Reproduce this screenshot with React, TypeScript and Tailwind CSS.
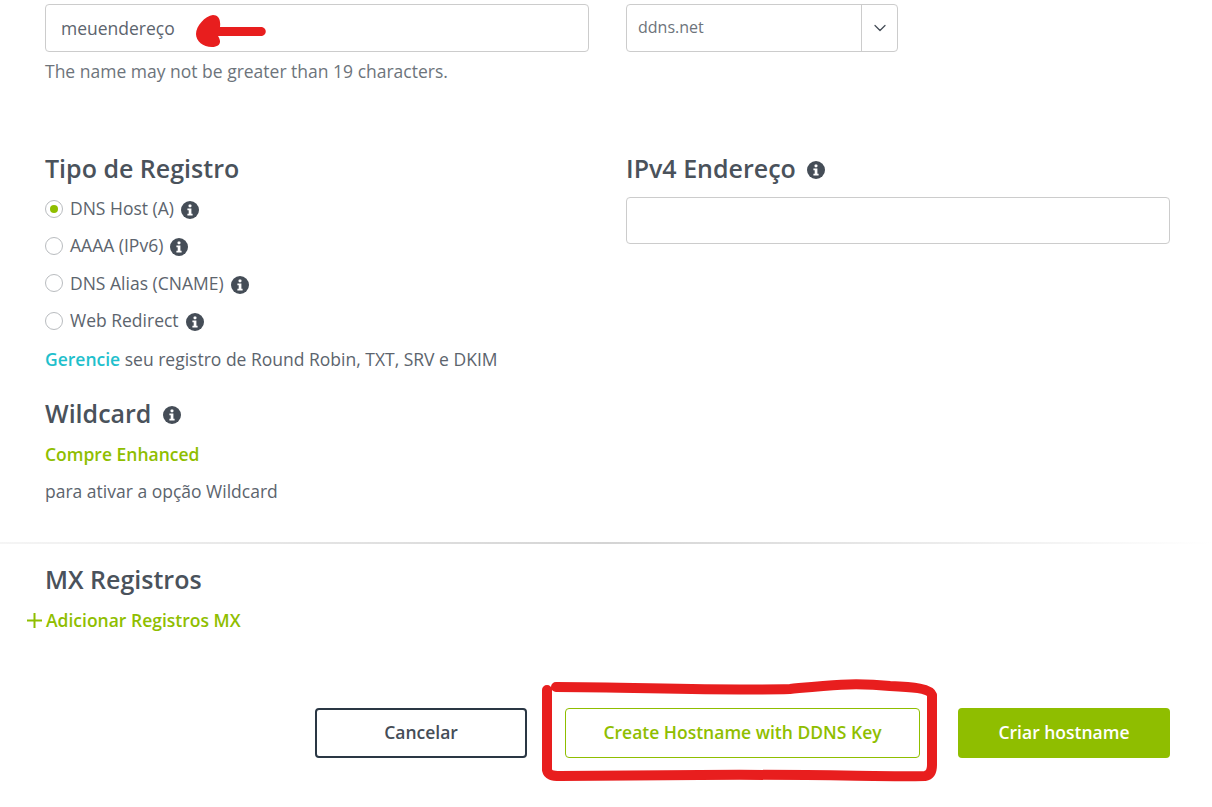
import React from 'react';
import { ChevronDown } from 'lucide-react';

const InfoIcon: React.FC<{ size?: number }> = ({ size = 18 }) => (
  <svg width={size} height={size} viewBox="0 0 18 18" className="shrink-0">
    <circle cx="9" cy="9" r="9" fill="#454d57" />
    <rect x="7.6" y="3.6" width="2.8" height="2.6" rx="0.6" fill="#fff" />
    <path d="M6.4 7.6h4v5.2h1.2v1.6H6.4v-1.6h1.3V9.2H6.4z" fill="#fff" />
  </svg>
);

const radios = [
  { label: 'DNS Host (A)', checked: true, gap: 'h-[37px]' },
  { label: 'AAAA (IPv6)', checked: false, gap: 'h-[37px]' },
  { label: 'DNS Alias (CNAME)', checked: false, gap: 'h-[38px]' },
  { label: 'Web Redirect', checked: false, gap: 'h-[37px]' },
];

const RadioRow: React.FC<{ label: string; checked: boolean; gap: string }> = ({ label, checked, gap }) => (
  <div className={`flex items-center ${gap}`}>
    <span className="flex items-center justify-center w-[18px] h-[18px] rounded-full border border-[#b9bcbf] bg-white mr-[7px]">
      {checked && <span className="w-[8px] h-[8px] rounded-full bg-[#8fbe00]" />}
    </span>
    <span className="text-[17.5px] text-[#5c646d] mr-[7px]">{label}</span>
    <span className="mt-[3px]">
      <InfoIcon />
    </span>
  </div>
);

export default function App() {
  return (
    <div className="relative h-[807px] w-[1212px] overflow-hidden bg-white font-['Open_Sans',sans-serif]">
      <div className="px-[45px] pt-[4px]">
        <div className="grid grid-cols-[544px_544px] gap-x-[37px]">
          <div>
            <div className="flex items-center h-[48px] pl-[15px] border border-[#ccc] rounded-[4px] text-[17.5px] text-[#5c646d]">
              meuendereço
            </div>
            <p className="mt-[6px] text-[17.5px] leading-[26px] text-[#6d747b]">
              The name may not be greater than 19 characters.
            </p>

            <h2 className="mt-[66px] text-[25px] leading-[36px] font-semibold text-[#4a525b]">Tipo de Registro</h2>
            <div className="mt-[4px]">
              {radios.map((r) => (
                <RadioRow key={r.label} {...r} />
              ))}
            </div>
            <p className="mt-[7px] text-[17.5px] leading-[26px] text-[#5c646d]">
              <a className="font-semibold text-[#1fc0cc]">Gerencie</a> seu registro de Round Robin, TXT, SRV e DKIM
            </p>

            <div className="mt-[23px] flex items-center gap-[12px]">
              <h2 className="text-[25px] leading-[36px] font-semibold text-[#4a525b]">Wildcard</h2>
              <span className="mt-[3px]">
                <InfoIcon />
              </span>
            </div>
            <a className="block mt-[10px] text-[17.5px] leading-[26px] font-semibold text-[#8fbe00]">Compre Enhanced</a>
            <p className="mt-[11px] text-[17.5px] leading-[26px] text-[#5c646d]">para ativar a opção Wildcard</p>
          </div>

          <div>
            <div className="flex w-[272px] h-[48px] border border-[#ccc] rounded-[4px]">
              <div className="flex-1 pl-[11px] pt-[9px] text-[16px] leading-[26px] text-[#6d747b]">ddns.net</div>
              <div className="flex items-center justify-center w-[36px] border-l border-[#ccc]">
                <ChevronDown size={20} strokeWidth={1.5} className="text-[#454d57]" />
              </div>
            </div>
            <div className="mt-[98px] flex items-center gap-[11px]">
              <h2 className="text-[25px] leading-[36px] font-semibold text-[#4a525b]">IPv4 Endereço</h2>
              <span className="mt-[3px]">
                <InfoIcon />
              </span>
            </div>
            <div className="mt-[11px] h-[47px] border border-[#ccc] rounded-[4px]" />
          </div>
        </div>
      </div>

      <div className="mt-[38px] h-[2px] bg-gradient-to-r from-[#f5f5f5] via-[#d4d4d4] to-transparent" />

      <div className="pl-[45px]">
        <h2 className="mt-[17px] text-[25px] leading-[36px] font-semibold text-[#4a525b]">MX Registros</h2>
      </div>
      <div className="mt-[10px] pl-[27px] flex items-center h-[26px] text-[17.5px] font-semibold text-[#8fbe00]">
        <svg width="15" height="15" viewBox="0 0 15 15" className="mr-[4px]">
          <path d="M6.5 0h2v6.5H15v2H8.5V15h-2V8.5H0v-2h6.5z" fill="#8fbe00" />
        </svg>
        Adicionar Registros MX
      </div>

      <div className="mt-[75px] pr-[42px] flex justify-end gap-[38px]">
        <button className="w-[212px] h-[50px] pb-[2px] border-2 border-[#2a3744] rounded-[4px] text-[17.5px] font-semibold text-[#454d57]">
          Cancelar
        </button>
        <button className="w-[355px] h-[50px] pb-[2px] border border-[#8fbe00] rounded-[4px] text-[17.5px] font-semibold text-[#8fbe00]">
          Create Hostname with DDNS Key
        </button>
        <button className="w-[212px] h-[50px] pb-[2px] rounded-[4px] bg-[#8fbe00] text-[17.5px] font-semibold text-white">
          Criar hostname
        </button>
      </div>

      {/* red marker scribbles on top of the screenshot */}
      <svg className="absolute left-0 top-0 pointer-events-none" width="1212" height="807" fill="none">
        <path d="M213 15C218 15 221 19 220 27L262 27C267 28 267 35 262 36L218 36C222 42 220 47 212 47C203 47 196 41 196 34C196 26 205 16 213 15Z" fill="#e81e1e" />
        <path d="M547 690L547 770C548 775 552 776 560 776L700 775C800 774 900 777 925 776C931 775 932 770 932 765L932 695C930 689 915 687 890 686C850 682 820 686 790 689C720 691 630 687 556 687" stroke="#e81e1e" strokeWidth="10" strokeLinecap="round" strokeLinejoin="round" />
      </svg>
    </div>
  );
}
